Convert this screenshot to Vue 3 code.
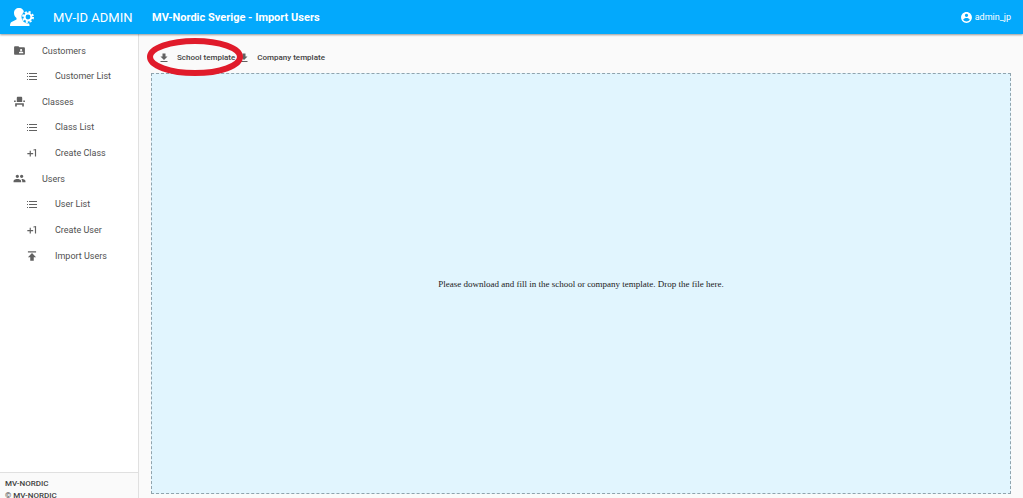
<script setup>
const icons = {
  folder: 'M20 6h-8l-2-2H4c-1.1 0-2 .9-2 2v12c0 1.1.9 2 2 2h16c1.1 0 2-.9 2-2V8c0-1.1-.9-2-2-2zm-5 3c1.1 0 2 .9 2 2s-.9 2-2 2-2-.9-2-2 .9-2 2-2zm4 8h-8v-1c0-1.33 2.67-2 4-2s4 .67 4 2v1z',
  list: 'M3.43 6.857h1.714v1.714H3.43zM6.857 6.857h13.714v1.714H6.857zM3.43 12h1.714v1.714H3.43zM6.857 12h13.714v1.714H6.857zM3.43 17.143h1.714v1.714H3.43zM6.857 17.143h13.714v1.714H6.857z',
  seat: 'M4 18v3h3v-3h10v3h3v-6H4zm15-8h3v3h-3zM2 10h3v3H2zm15 3H7V5c0-1.1.9-2 2-2h6c1.1 0 2 .9 2 2v8z',
  plus: 'M10 8H8v4H4v2h4v4h2v-4h4v-2h-4zm4.5-1.92V7.9l2.5-.5V18h2V5z',
  people: 'M16 11c1.66 0 2.99-1.34 2.99-3S17.66 5 16 5s-3 1.34-3 3 1.34 3 3 3zm-8 0c1.66 0 2.99-1.34 2.99-3S9.66 5 8 5 5 6.34 5 8s1.34 3 3 3zm0 2c-2.33 0-7 1.17-7 3.5V19h14v-2.5c0-2.33-4.67-3.5-7-3.5zm8 0c-.29 0-.62.02-.97.05 1.16.84 1.97 1.97 1.97 3.45V19h6v-2.5c0-2.33-4.67-3.5-7-3.5z',
  publish: 'M5 4v2h14V4H5zm0 10h4v6h6v-6h4l-7-7-7 7z',
  download: 'M19 9h-4V3H9v6H5l7 7 7-7zM5 18v2h14v-2H5z',
  account: 'M12 2C6.48 2 2 6.48 2 12s4.48 10 10 10 10-4.48 10-10S17.52 2 12 2zm0 3c1.66 0 3 1.34 3 3s-1.34 3-3 3-3-1.34-3-3 1.34-3 3-3zm0 14.2c-2.5 0-4.71-1.28-6-3.22.03-1.99 4-3.08 6-3.08 1.99 0 5.97 1.09 6 3.08-1.29 1.94-3.5 3.22-6 3.22z',
}
const menu = [
  { label: 'Customers', icon: 'folder', items: [{ label: 'Customer List', icon: 'list' }] },
  { label: 'Classes', icon: 'seat', items: [{ label: 'Class List', icon: 'list' }, { label: 'Create Class', icon: 'plus' }] },
  { label: 'Users', icon: 'people', items: [{ label: 'User List', icon: 'list' }, { label: 'Create User', icon: 'plus' }, { label: 'Import Users', icon: 'publish' }] },
]
</script>

<template>
  <div class="app">
    <header class="topbar">
      <div class="brand">
        <svg class="logo" viewBox="0 0 27 20" aria-hidden="true">
          <path d="M10 1c3 0 5 2 5 5 0 2-.8 4-2 5v1.500l6 2.500c1 .5 1.500 2 1.500 4H1c0-2 .5-3.500 1.500-4L7.500 12.500V11C6 10 5 8 5 6c0-3 2-5 5-5z" />
          <circle class="logo-gap" cx="19" cy="10" r="6.500" />
          <circle class="gear-teeth" cx="19" cy="10" r="5" />
          <circle class="gear-ring" cx="19" cy="10" r="3.400" />
        </svg>
        <span class="brand-name">MV-ID ADMIN</span>
      </div>
      <h1>MV-Nordic Sverige - Import Users</h1>
      <a class="account" href="#account">
        <svg viewBox="0 0 24 24" aria-hidden="true"><path :d="icons.account" /></svg>
        admin_jp
      </a>
    </header>

    <div class="body">
      <aside class="sidebar">
        <nav>
          <template v-for="group in menu" :key="group.label">
            <a class="group" href="#">
              <svg viewBox="0 0 24 24" aria-hidden="true"><path :d="icons[group.icon]" /></svg>
              {{ group.label }}
            </a>
            <a v-for="item in group.items" :key="item.label" class="item" href="#">
              <svg viewBox="0 0 24 24" aria-hidden="true"><path :d="icons[item.icon]" /></svg>
              {{ item.label }}
            </a>
          </template>
        </nav>
        <footer>
          <div>MV-NORDIC</div>
          <div>© MV-NORDIC</div>
        </footer>
      </aside>

      <main>
        <div class="toolbar">
          <button type="button" class="template-button">
            <svg viewBox="0 0 24 24" aria-hidden="true"><path :d="icons.download" /></svg>
            School template
          </button>
          <button type="button" class="template-button">
            <svg viewBox="0 0 24 24" aria-hidden="true"><path :d="icons.download" /></svg>
            Company template
          </button>
          <svg class="highlight" viewBox="0 0 98 38" aria-hidden="true">
            <ellipse cx="49" cy="19" rx="45" ry="16" />
          </svg>
        </div>
        <section class="dropzone">
          <p>Please download and fill in the school or company template. Drop the file here.</p>
        </section>
      </main>
    </div>
  </div>
</template>

<style>
body {
  margin: 0;
  overflow: hidden;
}
</style>

<style scoped>
.app {
  display: flex;
  flex-direction: column;
  height: 100vh;
  background: #fafafa;
  color: #505050;
  font-family: Roboto, "Liberation Sans", sans-serif;
  font-size: 9px;
}

svg {
  flex: none;
  fill: currentColor;
}

a {
  color: inherit;
  text-decoration: none;
}

.topbar {
  display: flex;
  align-items: center;
  flex: none;
  height: 34px;
  padding-right: 12px;
  background: #03a9fc;
  color: #fff;
  box-shadow: 0 1px 2px rgba(0, 0, 0, 0.4);
  z-index: 1;
}

.brand {
  display: flex;
  align-items: center;
  flex: none;
  gap: 17px;
  box-sizing: border-box;
  width: 152px;
  padding-left: 9px;
}

.logo {
  width: 27px;
  height: 20px;
}

.logo-gap {
  fill: #03a9fc;
}

.gear-teeth,
.gear-ring {
  fill: none;
  stroke: #fff;
  stroke-width: 2;
}

.gear-teeth {
  stroke-dasharray: 2.100 1.827;
}

.brand-name {
  font-size: 13px;
}

h1 {
  flex: 1;
  margin: 0;
  font-size: 11px;
  font-weight: 700;
}

.account {
  display: flex;
  align-items: center;
  gap: 2px;
}

.account svg {
  width: 13px;
  height: 13px;
}

.body {
  display: flex;
  flex: 1;
  min-height: 0;
}

.sidebar {
  display: flex;
  flex-direction: column;
  flex: none;
  box-sizing: border-box;
  width: 139px;
  border-right: 1px solid #e0e0e0;
  background: #fff;
}

nav {
  flex: 1;
  padding-top: 4px;
}

.group,
.item {
  display: flex;
  align-items: center;
  gap: 16px;
}

.group {
  height: 25px;
  padding-left: 13px;
}

.item {
  height: 26px;
  padding-left: 25px;
}

nav svg {
  color: #616161;
}

.group svg {
  width: 13px;
  height: 13px;
}

.item svg {
  width: 14px;
  height: 14px;
}

footer {
  box-sizing: border-box;
  height: 26px;
  padding: 5px;
  border-top: 1px solid #e0e0e0;
  background: #fafafa;
  color: #424242;
  font-size: 8px;
  font-weight: 500;
  line-height: 12px;
}

main {
  display: flex;
  flex-direction: column;
  flex: 1;
  min-width: 0;
  padding: 8px 12px 4px;
}

.toolbar {
  position: relative;
  display: flex;
  align-items: center;
  flex: none;
  gap: 3px;
  height: 31px;
  padding-left: 7px;
}

.template-button {
  display: flex;
  align-items: center;
  gap: 7px;
  padding: 0;
  border: 0;
  background: none;
  color: #424242;
  font: 500 8px Roboto, "Liberation Sans", sans-serif;
}

.template-button svg {
  width: 12px;
  height: 12px;
  color: #616161;
}

.highlight {
  position: absolute;
  top: -4px;
  left: -5px;
  width: 98px;
  height: 38px;
  fill: none;
  stroke: #e01b2b;
  stroke-width: 6;
}

.dropzone {
  display: flex;
  align-items: center;
  justify-content: center;
  flex: 1;
  border: 1px dashed #90a4ae;
  background: #e1f5fe;
}

.dropzone p {
  margin: 0;
  color: #222;
  font-family: "Liberation Serif", serif;
  font-size: 9px;
}
</style>
